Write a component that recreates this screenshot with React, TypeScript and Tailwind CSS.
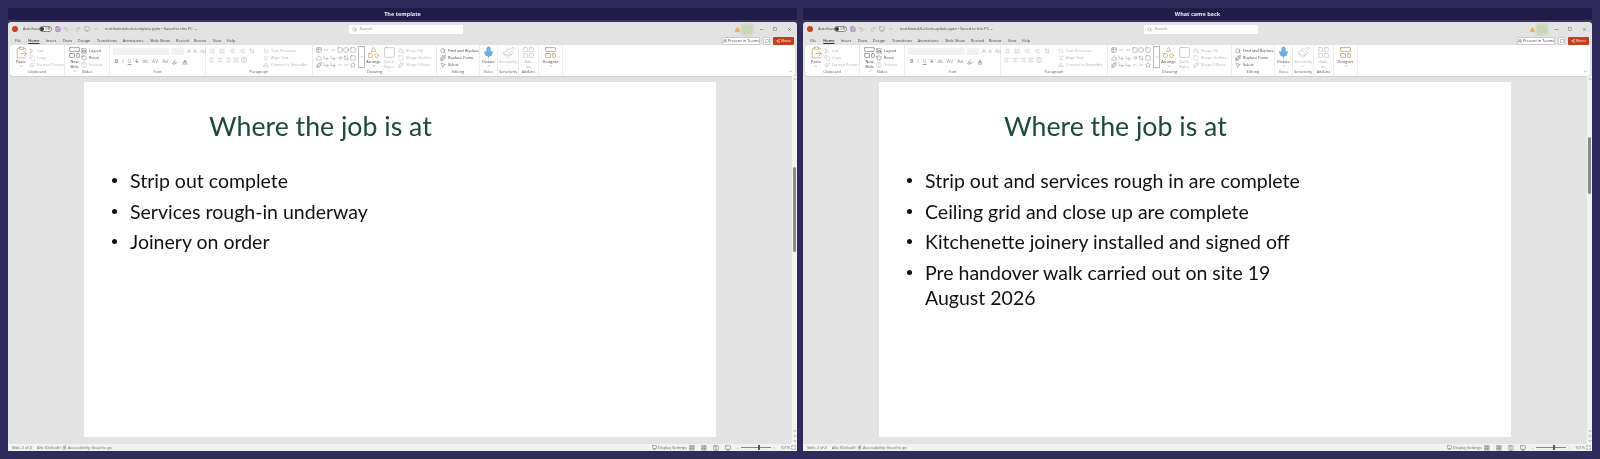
import React from 'react';
import {
  AlignCenter,
  AlignJustify,
  AlignLeft,
  AlignRight,
  ArrowRight,
  ArrowUpDown,
  Baseline,
  ChevronDown,
  ChevronUp,
  Circle,
  ClipboardPaste,
  Columns2,
  Copy,
  CornerDownRight,
  Highlighter,
  IndentDecrease,
  IndentIncrease,
  LayoutGrid,
  LayoutTemplate,
  List,
  ListOrdered,
  Maximize,
  Mic,
  Minus,
  MessageSquare,
  Monitor,
  MousePointer2,
  Paintbrush,
  PaintBucket,
  Redo2,
  RotateCcw,
  Save,
  Scissors,
  Search,
  Shapes,
  Share2,
  Sparkles,
  Square,
  Star,
  Table2,
  Triangle,
  Undo2,
  Users,
  X,
  Accessibility,
} from 'lucide-react';

const TABS = [
  { name: 'File', w: 'w-[16px]' },
  { name: 'Home', w: 'w-[16px]' },
  { name: 'Insert', w: 'w-[18px]' },
  { name: 'Draw', w: 'w-[15px]' },
  { name: 'Design', w: 'w-[18px]' },
  { name: 'Transitions', w: 'w-[28px]' },
  { name: 'Animations', w: 'w-[24px]' },
  { name: 'Slide Show', w: 'w-[30px]' },
  { name: 'Record', w: 'w-[15px]' },
  { name: 'Review', w: 'w-[20px]' },
  { name: 'View', w: 'w-[14px]' },
  { name: 'Help', w: 'w-[14px]' },
];

const SHAPES = [
  Table2, Minus, Minus, Square, Circle, Square,
  Triangle, CornerDownRight, CornerDownRight, ArrowRight, ArrowUpDown, Square,
  Sparkles, CornerDownRight, CornerDownRight, ChevronUp, ChevronDown, Star,
];

const ICON = 'w-[6px] h-[6px] shrink-0';

const Tool: React.FC<{ icon: React.ElementType; label: string; off?: boolean }> = ({ icon: Icon, label, off }) => (
  <div className={`flex items-center gap-[2px] h-[8px] whitespace-nowrap ${off ? 'text-[#b4b4b4]' : 'text-[#444]'}`}>
    <Icon className={ICON} strokeWidth={1.5} />
    <span>{label}</span>
  </div>
);

const Big: React.FC<{ icon: React.ElementType; label: string; color: string; w: string; off?: boolean }> = ({ icon: Icon, label, color, w, off }) => (
  <div className={`flex flex-col items-center shrink-0 ${w} ${off ? 'text-[#b4b4b4]' : 'text-[#444]'}`}>
    <Icon className={`w-[13px] h-[13px] shrink-0 ${color}`} strokeWidth={1.1} />
    <span className="leading-[5px] text-center">{label}</span>
    <ChevronDown className="w-[4px] h-[4px] shrink-0" />
  </div>
);

const Group: React.FC<{ label: string; w: string; children: React.ReactNode }> = ({ label, w, children }) => (
  <div className={`${w} h-full shrink-0 flex flex-col border-r border-[#ececec]`}>
    <div className="flex-1 flex min-h-0 pt-[1px] px-[3px]">{children}</div>
    <div className="h-[7px] leading-[6px] text-center text-[3.9px] text-[#666]">{label}</div>
  </div>
);

const Ribbon: React.FC = () => (
  <div className="mx-[2px] h-[31px] bg-white rounded-[3px] flex text-[3.9px] shadow-[0_1px_1px_#d0d0d0]">
    <Group label="Clipboard" w="w-[55px]">
      <Big icon={ClipboardPaste} label="Paste" color="text-[#b08a3c]" w="w-[16px]" />
      <div className="flex flex-col pt-[1px]">
        <Tool icon={Scissors} label="Cut" off />
        <Tool icon={Copy} label="Copy" off />
        <Tool icon={Paintbrush} label="Format Painter" off />
      </div>
    </Group>
    <Group label="Slides" w="w-[45px]">
      <Big icon={LayoutTemplate} label="New Slide" color="text-[#667]" w="w-[13px]" />
      <div className="flex flex-col pt-[1px]">
        <Tool icon={LayoutTemplate} label="Layout" />
        <Tool icon={RotateCcw} label="Reset" />
        <Tool icon={Columns2} label="Section" off />
      </div>
    </Group>
    <Group label="Font" w="w-[96px]">
      <div className="flex flex-col gap-[3px] mt-[2px]">
        <div className="flex items-center gap-[3px] text-[#b4b4b4]">
          <div className="w-[56px] h-[7px] bg-[#f1f1f1]" />
          <div className="w-[12px] h-[7px] bg-[#f1f1f1]" />
          <span className="text-[6px] leading-[7px]">A</span>
          <span className="text-[5px] leading-[7px]">A</span>
          <span className="text-[5px] leading-[7px]">Ap</span>
        </div>
        <div className="flex items-center gap-[4px] text-[#999] text-[5px] pl-[2px]">
          <span className="font-bold">B</span>
          <span className="italic">I</span>
          <span className="underline">U</span>
          <span className="line-through">S</span>
          <span>ab</span>
          <span>AV</span>
          <span>Aa</span>
          <Highlighter className={`${ICON} text-[#666]`} />
          <Baseline className={`${ICON} text-[#555]`} />
        </div>
      </div>
    </Group>
    <Group label="Paragraph" w="w-[107px]">
      <div className="flex flex-col gap-[3px] mt-[2px] w-[54px] shrink-0 text-[#b4b4b4]">
        <div className="flex gap-[4px]">
          <List className={ICON} />
          <ListOrdered className={ICON} />
          <IndentDecrease className={ICON} />
          <IndentIncrease className={ICON} />
          <ArrowUpDown className={ICON} />
        </div>
        <div className="flex gap-[2px]">
          <AlignLeft className={ICON} />
          <AlignCenter className={ICON} />
          <AlignRight className={ICON} />
          <AlignJustify className={ICON} />
          <Columns2 className={ICON} />
        </div>
      </div>
      <div className="flex flex-col pt-[1px]">
        <Tool icon={ArrowUpDown} label="Text Direction" off />
        <Tool icon={AlignCenter} label="Align Text" off />
        <Tool icon={Shapes} label="Convert to SmartArt" off />
      </div>
    </Group>
    <Group label="Drawing" w="w-[124px]">
      <div className="grid grid-cols-6 gap-y-[1px] w-[41px] h-[22px] mt-[1px] shrink-0 text-[#555]">
        {SHAPES.map((Shape, i) => (
          <Shape key={i} className={ICON} strokeWidth={1.3} />
        ))}
      </div>
      <div className="ml-[1px] w-[7px] h-[22px] shrink-0 border border-[#bbb] flex items-center justify-center">
        <ChevronDown className="w-[4px] h-[4px] text-[#555]" />
      </div>
      <Big icon={Shapes} label="Arrange" color="text-[#c9973a]" w="w-[17px]" />
      <Big icon={Square} label="Quick Styles" color="text-[#aaa]" w="w-[14px]" off />
      <div className="flex flex-col ml-[2px] pt-[1px]">
        <Tool icon={PaintBucket} label="Shape Fill" off />
        <Tool icon={Square} label="Shape Outline" off />
        <Tool icon={Sparkles} label="Shape Effects" off />
      </div>
    </Group>
    <Group label="Editing" w="w-[43px]">
      <div className="flex flex-col pt-[1px]">
        <Tool icon={Search} label="Find and Replace" />
        <Tool icon={Sparkles} label="Replace Fonts" />
        <Tool icon={MousePointer2} label="Select" />
      </div>
    </Group>
    <Group label="Voice" w="w-[18px]">
      <Big icon={Mic} label="Dictate" color="text-[#3f8fd6] fill-[#7db4e6]" w="w-full" />
    </Group>
    <Group label="Sensitivity" w="w-[21px]">
      <Big icon={Paintbrush} label="Sensitivity" color="text-[#bbb]" w="w-full" off />
    </Group>
    <Group label="Add-ins" w="w-[20px]">
      <Big icon={LayoutGrid} label="Add-ins" color="text-[#bbb]" w="w-full" off />
    </Group>
    <div className="w-[24px] pt-[1px] border-r border-[#ececec]">
      <Big icon={LayoutTemplate} label="Designer" color="text-[#a8823a]" w="w-full" />
    </div>
    <div className="flex-1 flex items-end justify-end p-[2px]">
      <ChevronDown className="w-[5px] h-[5px] text-[#666]" />
    </div>
  </div>
);

const Slide: React.FC<{ items: string[] }> = ({ items }) => (
  <div className="w-[632px] h-[355px] bg-white font-['Lato',sans-serif]">
    <h1 className="pl-[125px] pt-[27px] text-[26.7px] leading-[34px] text-[#1e4a3d] whitespace-nowrap">Where the job is at</h1>
    <ul className="mt-[25px] pl-[46px] w-[440px] text-[19.5px] leading-[25px] text-[#111] flex flex-col gap-[5.6px]">
      {items.map((item) => (
        <li key={item} className="relative">
          <span className="absolute -left-[18px] top-[10px] w-[5px] h-[5px] rounded-full bg-[#111]" />
          {item}
        </li>
      ))}
    </ul>
  </div>
);

const Scrollbar: React.FC<{ thumb: string }> = ({ thumb }) => (
  <div className="w-[5px] shrink-0 bg-[#f3f3f3] flex flex-col items-center text-[#555]">
    <ChevronUp className="w-[4px] h-[4px] mt-[1px]" strokeWidth={3} />
    <div className={`w-[3px] bg-[#8a8a8a] rounded-sm ${thumb}`} />
    <div className="mt-auto flex flex-col items-center gap-[1px] pb-[1px]">
      <ChevronDown className="w-[4px] h-[4px]" strokeWidth={3} />
      <ChevronUp className="w-[4px] h-[4px]" strokeWidth={3} />
      <ChevronDown className="w-[4px] h-[4px]" strokeWidth={3} />
    </div>
  </div>
);

const Pane: React.FC<{ heading: string; file: string; items: string[]; thumb: string }> = ({ heading, file, items, thumb }) => (
  <section className="w-[789px] shrink-0 flex flex-col">
    <div className="h-[12px] bg-[#201c47] text-center text-[5.5px] leading-[12px] font-bold text-[#eceaf5]">{heading}</div>
    <div className="h-[2px] bg-[#3a3566]" />
    <div className="h-[429px] bg-[#e3e3e3] rounded-t-[3px] flex flex-col overflow-hidden">
      <div className="h-[14px] flex items-center text-[3.9px] text-[#444] pl-[4px] whitespace-nowrap">
        <div className="w-[6px] h-[6px] shrink-0 rounded-full bg-[#c8431f] mr-[5px]" />
        <span className="w-[16px] shrink-0">AutoSave</span>
        <div className="w-[13px] h-[6px] shrink-0 rounded-full border border-[#888] bg-white flex items-center">
          <div className="w-[4px] h-[4px] rounded-full bg-[#333]" />
          <span className="ml-[1px] text-[3.5px]">Off</span>
        </div>
        <Save className="ml-[3px] w-[6px] h-[6px] shrink-0 text-[#8a3f9c]" />
        <Undo2 className="ml-[2px] w-[6px] h-[6px] shrink-0 text-[#aaa]" />
        <ChevronDown className="w-[3px] h-[3px] shrink-0 text-[#aaa]" />
        <Redo2 className="ml-[3px] w-[6px] h-[6px] shrink-0 text-[#aaa]" />
        <Monitor className="ml-[3px] w-[6px] h-[6px] shrink-0 text-[#999]" />
        <ChevronDown className="ml-[4px] w-[4px] h-[4px] shrink-0 text-[#555]" />
        <span className="ml-[7px] w-[244px] shrink-0">{file} • Saved to this PC ⌄</span>
        <div className="w-[114px] h-[9px] shrink-0 bg-white rounded-[1px] flex items-center pl-[3px] gap-[3px] text-[#888]">
          <Search className="w-[5px] h-[5px]" />
          <span>Search</span>
        </div>
        <div className="ml-auto flex items-center pr-[5px]">
          <Triangle className="w-[5px] h-[5px] text-[#c98a2a] fill-[#e8b96a]" />
          <div className="ml-[1px] w-[12px] h-[11px] bg-[#c9d8b4] blur-[1px]" />
          <Minus className="ml-[6px] w-[5px] h-[5px]" />
          <Square className="ml-[9px] w-[4px] h-[4px]" />
          <X className="ml-[10px] w-[5px] h-[5px]" />
        </div>
      </div>
      <div className="h-[9px] flex items-center text-[3.9px] text-[#444] pl-[2px]">
        {TABS.map((tab) => (
          <span
            key={tab.name}
            className={`${tab.w} shrink-0 text-center whitespace-nowrap ${tab.name === 'Home' ? 'underline underline-offset-1 font-semibold text-[#333]' : ''}`}
          >
            {tab.name}
          </span>
        ))}
        <div className="ml-auto flex items-center gap-[3px] pr-[3px]">
          <div className="w-[38px] h-[8px] bg-white border border-[#ccc] rounded-[1px] flex items-center justify-center gap-[1px] text-[#444] whitespace-nowrap overflow-hidden">
            <Users className="w-[4px] h-[4px] shrink-0" />
            Present in Teams
          </div>
          <div className="w-[7px] h-[8px] bg-white border border-[#ccc] rounded-[1px] flex items-center justify-center">
            <MessageSquare className="w-[4px] h-[4px]" />
          </div>
          <div className="w-[21px] h-[8px] bg-[#c43e1c] rounded-[1px] flex items-center justify-center gap-[1px] text-white">
            <Share2 className="w-[4px] h-[4px]" />
            Share
          </div>
        </div>
      </div>
      <Ribbon />
      <div className="flex-1 flex min-h-0">
        <div className="flex-1 flex justify-center pt-[6px]">
          <Slide items={items} />
        </div>
        <Scrollbar thumb={thumb} />
      </div>
      <div className="h-[7px] bg-[#f2f2f2] flex items-center text-[3.9px] text-[#666] pl-[4px] pr-[1px] whitespace-nowrap">
        <span className="w-[25px] shrink-0">Slide 2 of 4</span>
        <span className="w-[25px] shrink-0">Alte (Default)</span>
        <Accessibility className="w-[5px] h-[5px] mr-[1px] shrink-0" />
        <span>Accessibility: Good to go</span>
        <div className="ml-auto flex items-center">
          <Monitor className="w-[5px] h-[5px] mr-[1px]" />
          <span className="w-[31px]">Display Settings</span>
          <LayoutGrid className="w-[6px] h-[6px] mr-[6px] text-[#666]" />
          <LayoutGrid className="w-[6px] h-[6px] mr-[6px]" />
          <Columns2 className="w-[6px] h-[6px] mr-[6px]" />
          <Monitor className="w-[6px] h-[6px] mr-[6px]" />
          <span className="w-[4px]">-</span>
          <div className="w-[30px] h-[1px] bg-[#888] flex justify-center items-center">
            <div className="ml-[6px] w-[2px] h-[5px] bg-[#555]" />
          </div>
          <span className="ml-[2px] w-[7px]">+</span>
          <span className="w-[11px]">101%</span>
          <Maximize className="w-[5px] h-[5px] text-[#555]" />
        </div>
      </div>
    </div>
  </section>
);

export default function App() {
  return (
    <div className="w-[1600px] h-[459px] overflow-hidden bg-[#2f2b5c] flex gap-[6px] pl-[8px] pt-[8px] font-['Open_Sans',sans-serif] blur-[0.3px]">
      <Pane
        heading="The template"
        file="northwind-deck-template.pptx"
        thumb="mt-[86px] h-[85px]"
        items={['Strip out complete', 'Services rough-in underway', 'Joinery on order']}
      />
      <Pane
        heading="What came back"
        file="northwind-0-client-update.pptx"
        thumb="mt-[56px] h-[57px]"
        items={[
          'Strip out and services rough in are complete',
          'Ceiling grid and close up are complete',
          'Kitchenette joinery installed and signed off',
          'Pre handover walk carried out on site 19 August 2026',
        ]}
      />
    </div>
  );
}
